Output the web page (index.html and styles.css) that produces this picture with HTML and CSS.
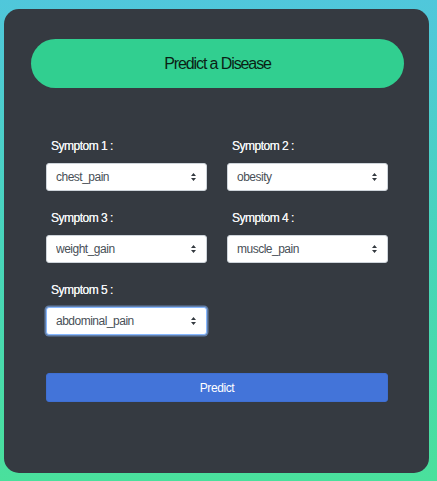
FILE: index.html
```html
<!DOCTYPE html>
<html lang="en">
<head>
<meta charset="utf-8">
<title>Predict a Disease</title>
<link rel="stylesheet" href="styles.css">
</head>
<body>
<div class="page">
  <div class="card">
    <div class="title-pill">Predict a Disease</div>
    <form class="form">
      <div class="grid">
        <div class="field">
          <label class="label" for="s1">Symptom 1 :</label>
          <select class="select" id="s1"><option>chest_pain</option></select>
        </div>
        <div class="field">
          <label class="label" for="s2">Symptom 2 :</label>
          <select class="select" id="s2"><option>obesity</option></select>
        </div>
        <div class="field">
          <label class="label" for="s3">Symptom 3 :</label>
          <select class="select" id="s3"><option>weight_gain</option></select>
        </div>
        <div class="field">
          <label class="label" for="s4">Symptom 4 :</label>
          <select class="select" id="s4"><option>muscle_pain</option></select>
        </div>
        <div class="field">
          <label class="label" for="s5">Symptom 5 :</label>
          <select class="select select-focus" id="s5"><option>abdominal_pain</option></select>
        </div>
      </div>
      <button type="button" class="predict-btn">Predict</button>
    </form>
  </div>
</div>
</body>
</html>
```

FILE: styles.css
```css
* { box-sizing: border-box; }
html, body {
  margin: 0;
  padding: 0;
  height: 481px;
}
body {
  background: linear-gradient(to bottom, #50c7db 0%, #48d4bb 50%, #4ae09c 100%);
  font-family: "Liberation Sans", Arial, sans-serif;
  overflow: hidden;
}
.page {
  padding: 9px 8px 8px 4px;
  height: 481px;
}
.card {
  width: 425px;
  height: 464px;
  background: #353a41;
  border-radius: 15px;
  padding: 30px 25px 0 27px;
}
.title-pill {
  height: 49px;
  background: #31cf90;
  border-radius: 25px;
  display: flex;
  align-items: center;
  justify-content: center;
  font-size: 16px;
  letter-spacing: -1.1px;
  color: #0b1f15;
  padding-top: 1px;
}
.form {
  margin-top: 50px;
  padding-left: 15px;
}
.grid {
  display: grid;
  grid-template-columns: 161px 161px;
  column-gap: 20px;
  row-gap: 19px;
}
.field {
  display: flex;
  flex-direction: column;
}
.label {
  display: block;
  font-size: 12px;
  line-height: 16px;
  letter-spacing: -0.5px;
  color: #f2f4f5;
  text-shadow: 0 0 0.4px #f2f4f5;
  padding-left: 5px;
  margin-bottom: 9px;
}
.select {
  -webkit-appearance: none;
  appearance: none;
  width: 161px;
  height: 28px;
  border: 1px solid #ced4da;
  border-radius: 3px;
  background-color: #fff;
  background-image: url("data:image/svg+xml,%3Csvg xmlns='http://www.w3.org/2000/svg' width='5' height='8' viewBox='0 0 5 8'%3E%3Cpath d='M2.5 0L5 3H0Z M2.5 8L0 5H5Z' fill='%23343a40'/%3E%3C/svg%3E");
  background-repeat: no-repeat;
  background-position: right 10px center;
  background-size: 5px 8px;
  padding: 0 20px 0 9px;
  font-family: "Liberation Sans", Arial, sans-serif;
  font-size: 12px;
  letter-spacing: -0.5px;
  color: #495057;
  outline: none;
}
.select-focus {
  border-color: #86b7fe;
  box-shadow: 0 0 0 1.5px rgba(134, 183, 254, 0.55);
}
.predict-btn {
  display: block;
  margin-top: 38px;
  width: 342px;
  height: 29px;
  background: #4374d9;
  border: 1px solid #3f6fd2;
  border-radius: 3px;
  color: #fff;
  font-family: "Liberation Sans", Arial, sans-serif;
  font-size: 12px;
  letter-spacing: -0.4px;
  padding: 0;
}
```
